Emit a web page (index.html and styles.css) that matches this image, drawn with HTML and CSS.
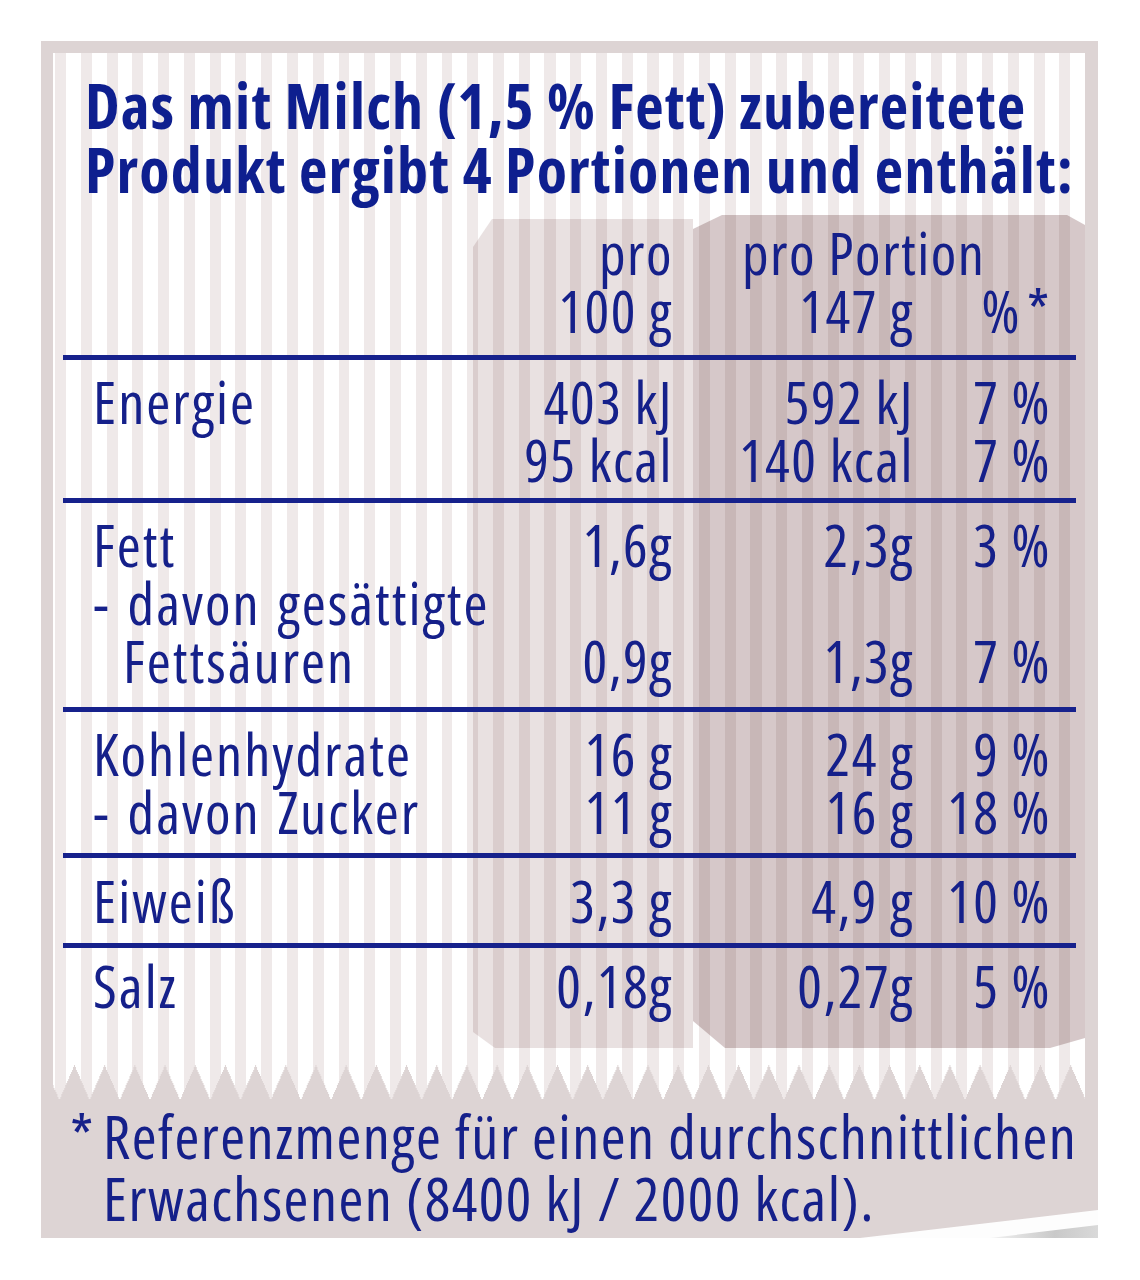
FILE: index.html
```html
<!DOCTYPE html>
<html lang="de">
<head>
<meta charset="utf-8">
<title>Nährwerte</title>
<link rel="stylesheet" href="styles.css">
</head>
<body>
<div class="panel">
  <div class="inner">
    <h1 class="title">Das mit Milch (1,5 % Fett) zubereitete<br>Produkt ergibt 4 Portionen und enthält:</h1>
    <div class="tablewrap">
      <div class="shades">
        <div class="shade shade-100"></div>
        <div class="shade shade-portion"></div>
      </div>
      <div class="table">
        <div class="row head">
          <div class="lab hl"></div>
          <div class="v1 h1c">pro<br>100 g</div>
          <div class="hp">pro Portion</div>
          <div class="vp hr2">147 g</div>
          <div class="pc hr2">%<span class="ast">*</span></div>
        </div>
        <div class="row r-en">
          <div class="lab">Energie</div>
          <div class="v1">403 kJ<br>95 kcal</div>
          <div class="vp">592 kJ<br>140 kcal</div>
          <div class="pc">7 %<br>7 %</div>
        </div>
        <div class="row r-fett">
          <div class="lab">Fett<br>- davon gesättigte<br><span class="ind">Fettsäuren</span></div>
          <div class="v1">1,6g<br>&nbsp;<br>0,9g</div>
          <div class="vp">2,3g<br>&nbsp;<br>1,3g</div>
          <div class="pc">3 %<br>&nbsp;<br>7 %</div>
        </div>
        <div class="row r-kh">
          <div class="lab">Kohlenhydrate<br>- davon Zucker</div>
          <div class="v1">16 g<br>11 g</div>
          <div class="vp">24 g<br>16 g</div>
          <div class="pc">9 %<br>18 %</div>
        </div>
        <div class="row r-ei">
          <div class="lab">Eiweiß</div>
          <div class="v1">3,3 g</div>
          <div class="vp">4,9 g</div>
          <div class="pc">10 %</div>
        </div>
        <div class="row last">
          <div class="lab">Salz</div>
          <div class="v1">0,18g</div>
          <div class="vp">0,27g</div>
          <div class="pc">5 %</div>
        </div>
      </div>
    </div>
    <div class="teeth"></div>
  </div>
  <div class="foot">
    <span class="star">*</span>
    <p class="foottext">Referenzmenge für einen durchschnittlichen<br>Erwachsenen (8400 kJ / 2000 kcal).</p>
  </div>
  <svg class="corner" width="238" height="28" viewBox="0 0 238 28" aria-hidden="true">
    <defs>
      <linearGradient id="g" x1="0" y1="0" x2="1" y2="0">
        <stop offset="0" stop-color="#f2f2f2"/>
        <stop offset="0.6" stop-color="#c9c9c9"/>
        <stop offset="1" stop-color="#d9d9d9"/>
      </linearGradient>
    </defs>
    <polygon points="0,28 238,0 238,28" fill="#fdfdfd"/>
    <polygon points="130,28 238,15 238,28" fill="url(#g)"/>
  </svg>
</div>
</body>
</html>
```

FILE: styles.css
```css
* { box-sizing: border-box; }
html, body { margin: 0; padding: 0; background: #fff; }
body {
  font-family: "Open Sans", "DejaVu Sans Condensed", "Liberation Sans", sans-serif;
  font-stretch: 75%;
  color: #15208a;
}
.panel {
  position: relative;
  width: 1057px;
  height: 1197px;
  margin: 41px 0 0 41px;
  background: #ddd4d4;
  padding: 12px 13px 0 12px;
}
.inner {
  display: flow-root;
  background-color: #fff;
  background-image: repeating-linear-gradient(90deg, #fff 0 2.25px, #efe9e9 2.25px 13.25px, #fff 13.25px 25.75px);
}
.title {
  margin: 20px 0 14px 32px;
  font-size: 62px;
  line-height: 64px;
  font-weight: 700;
  letter-spacing: 1.2px;
  color: #0e1f8f;
  white-space: nowrap;
}
.tablewrap {
  display: grid;
  margin-left: 10px;
}
.shades, .table { grid-area: 1 / 1; }
.shades {
  display: grid;
  grid-template-columns: 410px 220px 392px;
}
.shade { mix-blend-mode: multiply; }
.shade-100 {
  grid-column: 2;
  margin-top: 4px;
  background: #e9e1e1;
  clip-path: polygon(19px 0, 100% 0, 100% 100%, 22px 100%, 0 calc(100% - 16px), 0 28px);
}
.shade-portion {
  grid-column: 3;
  background: #d6c8c9;
  clip-path: polygon(29px 0, calc(100% - 18px) 0, 100% 10px, 100% calc(100% - 10px), calc(100% - 35px) 100%, 32px 100%, 0 calc(100% - 27px), 0 14px);
}
.table { position: relative; z-index: 1; }
.row {
  display: grid;
  grid-template-columns: 410px 220px 242px 141px;
  width: 1013px;
  border-bottom: 5px solid #16218c;
  font-size: 58px;
  line-height: 58px;
  letter-spacing: 1.5px;
  white-space: nowrap;
}
.row.head { padding: 9px 0 15px; }
.row.r-en { padding: 13px 0 9px; }
.row.r-fett { padding: 13px 0 17px; }
.row.r-kh { padding: 13px 0 12px; }
.row.r-ei { padding: 14px 0 13px; }
.row.last { border-bottom: 0; padding: 9px 0 33px; }
.lab { padding-left: 30px; letter-spacing: 2px; word-spacing: 4px; }
.ind { padding-left: 30px; }
.v1 { text-align: right; padding-right: 20px; }
.vp { text-align: right; padding-right: 21px; }
.pc { text-align: right; padding-right: 25px; }
.ast { margin-left: 6px; }
.head .hl { grid-column: 1; grid-row: 1 / 3; }
.head .h1c { grid-column: 2; grid-row: 1 / 3; }
.hp { grid-column: 3 / 5; grid-row: 1; padding-left: 49px; }
.head .vp.hr2 { grid-column: 3; grid-row: 2; }
.head .pc.hr2 { grid-column: 4; grid-row: 2; }
.teeth {
  height: 52px;
  background: conic-gradient(from 156.7deg at 50% 0, #ddd4d4 0deg 46.6deg, transparent 46.6deg) 6.4px 100% / 30.2px 35px repeat-x;
}
.foot {
  display: flex;
  padding: 5px 0 0 17px;
  font-size: 60px;
  line-height: 62px;
  letter-spacing: 1.5px;
  white-space: nowrap;
}
.star { flex: none; width: 33px; }
.foottext { margin: 0; }
.corner { position: absolute; right: 0; bottom: 0; }
```
